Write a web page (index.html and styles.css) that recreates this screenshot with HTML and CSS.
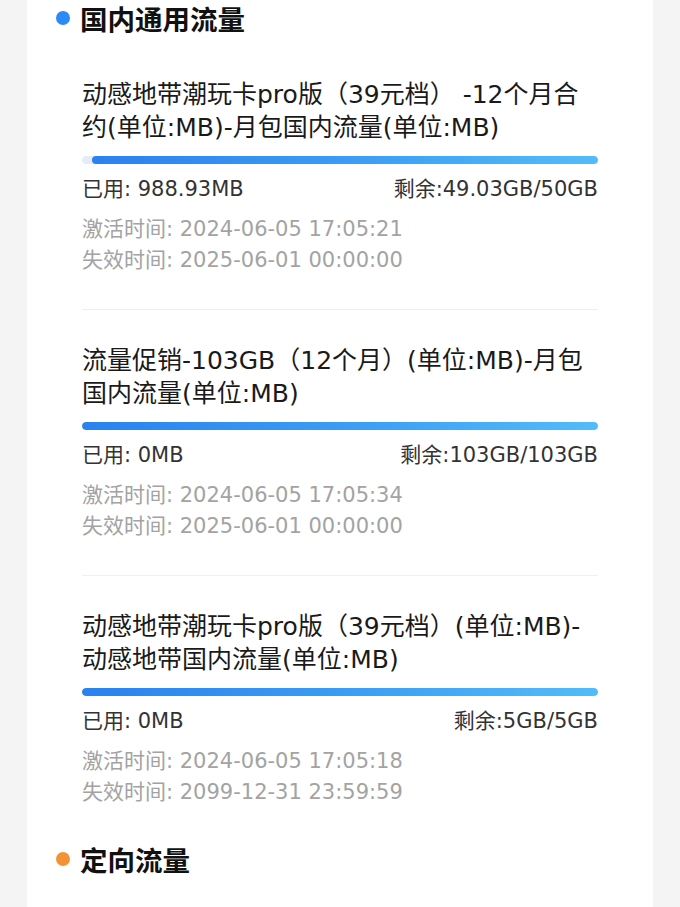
FILE: index.html
```html
<!DOCTYPE html>
<html lang="zh-CN">
<head>
<meta charset="utf-8">
<title>流量详情</title>
<link rel="stylesheet" href="styles.css">
</head>
<body>
<div class="page">
  <div class="card">
    <div class="sec-head"><span class="dot dot-blue"></span><span class="sec-title">国内通用流量</span></div>

    <div class="item item-first">
      <div class="item-title">动感地带潮玩卡pro版（39元档） -12个月合约(单位:MB)-月包国内流量(单位:MB)</div>
      <div class="bar"><div class="bar-fill" style="width:98.07%"></div></div>
      <div class="stats"><span>已用: 988.93MB</span><span>剩余:49.03GB/50GB</span></div>
      <div class="dates">
        <div>激活时间: 2024-06-05 17:05:21</div>
        <div>失效时间: 2025-06-01 00:00:00</div>
      </div>
    </div>

    <div class="item">
      <div class="item-title">流量促销-103GB（12个月）(单位:MB)-月包国内流量(单位:MB)</div>
      <div class="bar"><div class="bar-fill" style="width:100%"></div></div>
      <div class="stats"><span>已用: 0MB</span><span>剩余:103GB/103GB</span></div>
      <div class="dates">
        <div>激活时间: 2024-06-05 17:05:34</div>
        <div>失效时间: 2025-06-01 00:00:00</div>
      </div>
    </div>

    <div class="item item-last">
      <div class="item-title">动感地带潮玩卡pro版（39元档）(单位:MB)-动感地带国内流量(单位:MB)</div>
      <div class="bar"><div class="bar-fill" style="width:100%"></div></div>
      <div class="stats"><span>已用: 0MB</span><span>剩余:5GB/5GB</span></div>
      <div class="dates">
        <div>激活时间: 2024-06-05 17:05:18</div>
        <div>失效时间: 2099-12-31 23:59:59</div>
      </div>
    </div>

    <div class="sec-head"><span class="dot dot-orange"></span><span class="sec-title">定向流量</span></div>
  </div>
</div>
</body>
</html>
```
FILE: styles.css
```css
html, body {
  margin: 0;
  padding: 0;
  background: #f4f4f4;
}
body {
  font-family: "DejaVu Sans", "Noto Sans CJK SC", sans-serif;
  color: #1a1a1a;
}
.page {
  padding: 0 27px;
  min-height: 907px;
}
.card {
  background: #ffffff;
  min-height: 907px;
}
.sec-head {
  display: flex;
  align-items: center;
  height: 36px;
  padding-left: 29px;
  gap: 10px;
}
.dot {
  width: 14px;
  height: 14px;
  border-radius: 50%;
  flex: none;
}
.dot-blue { background: #2b8af5; }
.dot-orange { background: #f39335; }
.sec-title {
  font-family: "Noto Sans CJK SC", sans-serif;
  font-size: 27.5px;
  font-weight: 700;
  color: #111;
  line-height: 30px;
}
.item {
  margin: 0 55px;
  padding: 34px 0 33px;
  border-bottom: 1px solid #efefef;
}
.item-first { padding-top: 42px; }
.item-last { border-bottom: none; }
.item-title {
  font-size: 25px;
  line-height: 33px;
  color: #1a1a1a;
}
.bar {
  margin-top: 12px;
  height: 8px;
  border-radius: 4px;
  background: #e4edf8;
  display: flex;
  justify-content: flex-end;
  overflow: hidden;
}
.bar-fill {
  height: 100%;
  border-radius: 4px;
  background: linear-gradient(90deg, #2a82ef 0%, #3a9cf4 50%, #52bcf9 100%);
}
.stats {
  margin-top: 12px;
  display: flex;
  justify-content: space-between;
  font-size: 21px;
  line-height: 26px;
  color: #333;
}
.dates {
  margin-top: 12px;
  font-size: 21px;
  line-height: 31px;
  color: #a3a3a3;
}
```
